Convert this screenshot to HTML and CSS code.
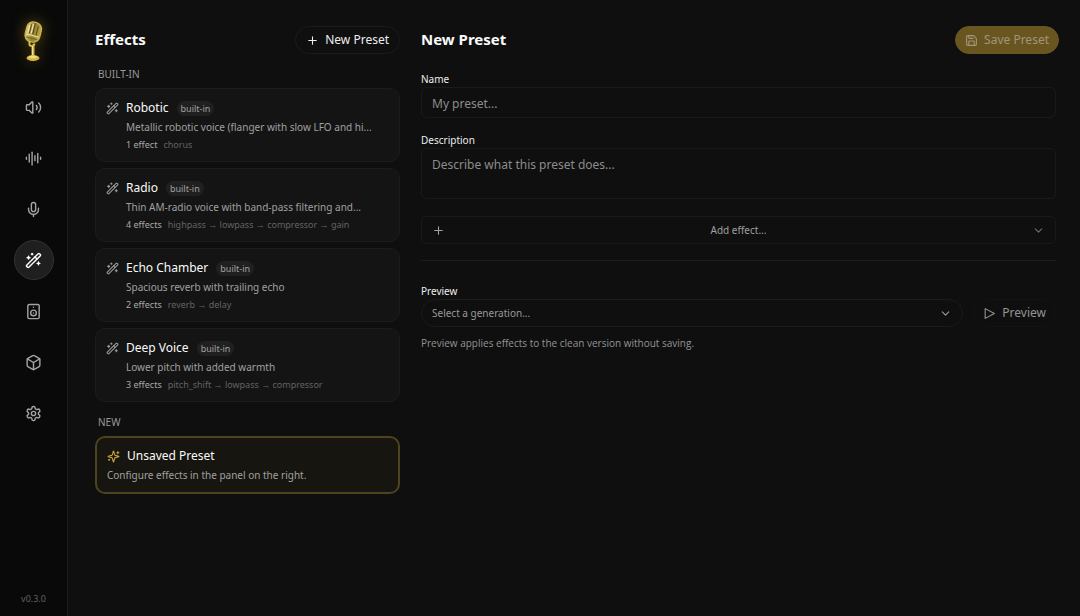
FILE: index.html
```
<!DOCTYPE html>
<html lang="en">
<head>
<meta charset="utf-8">
<meta name="viewport" content="width=device-width, initial-scale=1">
<title>Effects</title>
<link rel="stylesheet" href="styles.css">
</head>
<body>
<svg class="sprite" aria-hidden="true">
  <symbol id="wand" viewBox="0 0 24 24"><path d="m21.64 3.64-1.28-1.28a1.21 1.21 0 0 0-1.72 0L2.36 18.64a1.21 1.21 0 0 0 0 1.72l1.28 1.28a1.2 1.2 0 0 0 1.72 0L21.64 5.36a1.2 1.2 0 0 0 0-1.72"/><path d="m14 7 3 3"/><path d="M5 6v4"/><path d="M19 14v4"/><path d="M10 2v2"/><path d="M7 8H3"/><path d="M21 16h-4"/><path d="M11 3H9"/></symbol>
  <symbol id="plus" viewBox="0 0 24 24"><path d="M5 12h14"/><path d="M12 5v14"/></symbol>
  <symbol id="chevron" viewBox="0 0 24 24"><path d="m6 9 6 6 6-6"/></symbol>
</svg>
<div class="app">
  <nav class="sidebar" aria-label="Main">
    <svg class="logo" viewBox="0 0 36 52" role="img" aria-label="Microphone logo">
      <defs>
        <linearGradient id="gold" x1="0" y1="0" x2="1" y2="0"><stop offset="0" stop-color="#e0cc74"/><stop offset=".5" stop-color="#8f7d38"/><stop offset="1" stop-color="#c4a93e"/></linearGradient>
      </defs>
      <g transform="rotate(14 17 15)">
        <rect x="10" y="6" width="15" height="20" rx="6.500" fill="url(#gold)" stroke="#cdb558" stroke-width="1.200"/>
        <path d="M14 9v9M17.500 7v11M21 9v10" stroke="#574a1a" stroke-width="1"/>
        <path d="M12.500 10v8M15.800 8v10" stroke="#f3e7a8" stroke-width="1.200"/>
        <path d="M11 19.500h13" stroke="#e8d884" stroke-width="1.300"/>
        <path d="M12 22.500h11" stroke="#74642a" stroke-width="1"/>
      </g>
      <path d="M13.500 25v3.500c0 2 4.500 2 5-1" fill="none" stroke="#d9bf48" stroke-width="2"/>
      <path d="M17 29v11" stroke="#cfb54a" stroke-width="3"/>
      <path d="M16.500 30v9" stroke="#f3e390" stroke-width="1"/>
      <ellipse cx="17" cy="42" rx="6.500" ry="3" fill="#d4b840"/>
      <ellipse cx="17" cy="41" rx="4" ry="1.200" fill="#f0df80"/>
    </svg>
    <a class="nav-item" href="#generate" aria-label="Generate"><svg class="icon" viewBox="0 0 24 24"><path d="M11 4.702a.705.705 0 0 0-1.203-.498L6.413 7.587A1.400 1.400 0 0 1 5.416 8H3a1 1 0 0 0-1 1v6a1 1 0 0 0 1 1h2.416a1.400 1.400 0 0 1 .997.413l3.383 3.384A.705.705 0 0 0 11 19.298z"/><path d="M16 9a5 5 0 0 1 0 6"/><path d="M19.364 18.364a9 9 0 0 0 0-12.728"/></svg></a>
    <a class="nav-item" href="#stories" aria-label="Stories"><svg class="icon" viewBox="0 0 24 24"><path d="M2 10v3"/><path d="M6 6v11"/><path d="M10 3v18"/><path d="M14 8v7"/><path d="M18 5v13"/><path d="M22 10v3"/></svg></a>
    <a class="nav-item" href="#voices" aria-label="Voices"><svg class="icon" viewBox="0 0 24 24"><path d="M12 2a3 3 0 0 0-3 3v7a3 3 0 0 0 6 0V5a3 3 0 0 0-3-3Z"/><path d="M19 10v2a7 7 0 0 1-14 0v-2"/><path d="M12 19v3"/></svg></a>
    <a class="nav-item active" href="#effects" aria-label="Effects" aria-current="page"><svg class="icon"><use href="#wand"/></svg></a>
    <a class="nav-item" href="#audio" aria-label="Audio"><svg class="icon" viewBox="0 0 24 24"><rect width="16" height="20" x="4" y="2" rx="2"/><path d="M12 6h.01"/><circle cx="12" cy="14" r="4"/><path d="M12 14h.01"/></svg></a>
    <a class="nav-item" href="#models" aria-label="Models"><svg class="icon" viewBox="0 0 24 24"><path d="M21 8a2 2 0 0 0-1-1.730l-7-4a2 2 0 0 0-2 0l-7 4A2 2 0 0 0 3 8v8a2 2 0 0 0 1 1.730l7 4a2 2 0 0 0 2 0l7-4A2 2 0 0 0 21 16Z"/><path d="m3.300 7 8.700 5 8.700-5"/><path d="M12 22V12"/></svg></a>
    <a class="nav-item" href="#settings" aria-label="Settings"><svg class="icon" viewBox="0 0 24 24"><path d="M12.220 2h-.44a2 2 0 0 0-2 2v.18a2 2 0 0 1-1 1.730l-.43.25a2 2 0 0 1-2 0l-.15-.08a2 2 0 0 0-2.730.730l-.22.38a2 2 0 0 0 .730 2.730l.15.1a2 2 0 0 1 1 1.720v.51a2 2 0 0 1-1 1.740l-.15.09a2 2 0 0 0-.730 2.730l.22.38a2 2 0 0 0 2.730.730l.15-.08a2 2 0 0 1 2 0l.43.25a2 2 0 0 1 1 1.730V20a2 2 0 0 0 2 2h.44a2 2 0 0 0 2-2v-.18a2 2 0 0 1 1-1.730l.43-.25a2 2 0 0 1 2 0l.15.08a2 2 0 0 0 2.730-.730l.22-.39a2 2 0 0 0-.730-2.730l-.15-.08a2 2 0 0 1-1-1.740v-.5a2 2 0 0 1 1-1.740l.15-.09a2 2 0 0 0 .730-2.730l-.22-.38a2 2 0 0 0-2.730-.730l-.15.08a2 2 0 0 1-2 0l-.43-.25a2 2 0 0 1-1-1.730V4a2 2 0 0 0-2-2z"/><circle cx="12" cy="12" r="3"/></svg></a>
    <span class="version">v0.3.0</span>
  </nav>

  <main class="content">
    <section class="presets" aria-labelledby="effects-title">
      <header class="bar">
        <h1 class="title" id="effects-title">Effects</h1>
        <button class="pill new-button" type="button"><svg class="icon small"><use href="#plus"/></svg>New Preset</button>
      </header>
      <h2 class="group">BUILT-IN</h2>
      <ul class="cards">
        <li><button class="card" type="button">
          <svg class="icon card-icon"><use href="#wand"/></svg>
          <span class="name">Robotic <span class="badge">built-in</span></span>
          <span class="desc">Metallic robotic voice (flanger with slow LFO and hi...</span>
          <span class="meta"><span class="count">1 effect</span><span class="chain">chorus</span></span>
        </button></li>
        <li><button class="card" type="button">
          <svg class="icon card-icon"><use href="#wand"/></svg>
          <span class="name">Radio <span class="badge">built-in</span></span>
          <span class="desc">Thin AM-radio voice with band-pass filtering and...</span>
          <span class="meta"><span class="count">4 effects</span><span class="chain">highpass → lowpass → compressor → gain</span></span>
        </button></li>
        <li><button class="card" type="button">
          <svg class="icon card-icon"><use href="#wand"/></svg>
          <span class="name">Echo Chamber <span class="badge">built-in</span></span>
          <span class="desc">Spacious reverb with trailing echo</span>
          <span class="meta"><span class="count">2 effects</span><span class="chain">reverb → delay</span></span>
        </button></li>
        <li><button class="card" type="button">
          <svg class="icon card-icon"><use href="#wand"/></svg>
          <span class="name">Deep Voice <span class="badge">built-in</span></span>
          <span class="desc">Lower pitch with added warmth</span>
          <span class="meta"><span class="count">3 effects</span><span class="chain">pitch_shift → lowpass → compressor</span></span>
        </button></li>
      </ul>
      <h2 class="group">NEW</h2>
      <button class="card selected" type="button">
        <svg class="icon card-icon" viewBox="0 0 24 24"><path d="M9.937 15.500A2 2 0 0 0 8.500 14.063l-6.135-1.582a.5.5 0 0 1 0-.962L8.500 9.936A2 2 0 0 0 9.937 8.500l1.582-6.135a.5.5 0 0 1 .963 0L14.063 8.500A2 2 0 0 0 15.500 9.937l6.135 1.581a.5.5 0 0 1 0 .964L15.500 14.063a2 2 0 0 0-1.437 1.437l-1.582 6.135a.5.5 0 0 1-.963 0z"/><path d="M20 3v4"/><path d="M22 5h-4"/><path d="M4 17v2"/><path d="M5 18H3"/></svg>
        <span class="name">Unsaved Preset</span>
        <span class="desc">Configure effects in the panel on the right.</span>
      </button>
    </section>

    <section class="editor" aria-labelledby="editor-title">
      <header class="bar">
        <h2 class="title" id="editor-title">New Preset</h2>
        <button class="pill save-button" type="button" disabled><svg class="icon small" viewBox="0 0 24 24"><path d="M15.200 3a2 2 0 0 1 1.400.6l3.800 3.800a2 2 0 0 1 .6 1.400V19a2 2 0 0 1-2 2H5a2 2 0 0 1-2-2V5a2 2 0 0 1 2-2z"/><path d="M17 21v-7a1 1 0 0 0-1-1H8a1 1 0 0 0-1 1v7"/><path d="M7 3v4a1 1 0 0 0 1 1h7"/></svg>Save Preset</button>
      </header>
      <form class="form">
        <div class="field">
          <label class="label" for="name">Name</label>
          <input class="control" id="name" type="text" placeholder="My preset...">
        </div>
        <div class="field">
          <label class="label" for="description">Description</label>
          <textarea class="control area" id="description" placeholder="Describe what this preset does..."></textarea>
        </div>
        <button class="add-effect" type="button" aria-haspopup="listbox"><svg class="icon small"><use href="#plus"/></svg><span>Add effect...</span><svg class="icon small chevron"><use href="#chevron"/></svg></button>
        <div class="preview">
          <label class="label" for="generation">Preview</label>
          <div class="preview-row">
            <div class="select-wrap">
              <select class="select" id="generation"><option>Select a generation...</option></select>
              <svg class="icon small select-chevron"><use href="#chevron"/></svg>
            </div>
            <button class="pill preview-button" type="button" disabled><svg class="icon small" viewBox="0 0 24 24"><path d="M4 3l17 9-17 9z"/></svg>Preview</button>
          </div>
          <p class="hint">Preview applies effects to the clean version without saving.</p>
        </div>
      </form>
    </section>
  </main>
</div>
</body>
</html>
```

FILE: styles.css
```
* { box-sizing: border-box; }

body {
  margin: 0;
  background: #0f0f0f;
  color: #ededed;
  font-family: "Noto Sans", "Open Sans", sans-serif;
  font-size: 12px;
}

button, input, textarea, select { font: inherit; color: inherit; margin: 0; }
h1, h2, p, ul { margin: 0; padding: 0; }
ul { list-style: none; }

.sprite { display: none; }

.icon {
  width: 17px;
  height: 17px;
  flex: none;
  fill: none;
  stroke: currentColor;
  stroke-width: 2;
  stroke-linecap: round;
  stroke-linejoin: round;
}
.icon.small { width: 13px; height: 13px; }

.app { display: flex; min-height: 100vh; }

.sidebar {
  width: 68px;
  flex: none;
  display: flex;
  flex-direction: column;
  align-items: center;
  gap: 11px;
  padding: 16px 0 10px;
  background: #090909;
  border-right: 1px solid #1b1b1b;
}
.logo {
  width: 36px;
  height: 52px;
  margin-bottom: 8px;
  filter: drop-shadow(0 0 7px #9a7d1290);
}
.nav-item {
  width: 40px;
  height: 40px;
  display: grid;
  place-items: center;
  border: 1px solid transparent;
  border-radius: 50%;
  color: #a3a3a3;
}
.nav-item.active { color: #fff; background: #1f1f1f; border-color: #333; }
.version { margin-top: auto; font-size: 9px; line-height: 14px; color: #626262; }

.content {
  flex: 1;
  min-width: 0;
  display: flex;
  gap: 21px;
  padding: 26px 21px 20px 27px;
}
.presets { width: 305px; flex: none; }
.editor { flex: 1; min-width: 0; }

.bar { display: flex; align-items: center; justify-content: space-between; height: 28px; }
.title { padding-bottom: 2px; font-size: 15px; line-height: 20px; font-weight: 700; color: #fafafa; }

.pill {
  display: flex;
  align-items: center;
  justify-content: center;
  gap: 6px;
  height: 28px;
  padding: 0 9px;
  border: 1px solid #1b1b1b;
  border-radius: 14px;
  background: none;
  line-height: 16px;
  white-space: nowrap;
}
.new-button { padding: 0 10px; }
.save-button { border-color: #69551f; background: #69551f; color: #a1967a; }

.group {
  padding: 12px 3px 6px;
  font-size: 10px;
  line-height: 16px;
  font-weight: 400;
  color: #999;
}
.cards { display: grid; gap: 6px; }

.card {
  width: 100%;
  display: grid;
  grid-template-columns: 13px minmax(0, 1fr);
  column-gap: 7px;
  row-gap: 1px;
  padding: 9px 10px;
  text-align: left;
  background: #141414;
  border: 1px solid #1c1c1c;
  border-radius: 10px;
}
.card-icon { width: 13px; height: 13px; align-self: center; color: #999; }
.name { display: flex; align-items: center; gap: 8px; font-size: 12px; line-height: 20px; color: #fafafa; }
.badge { padding: 0 4px; border-radius: 8px; background: #202020; font-size: 9px; line-height: 15px; color: #a0a0a0; }
.desc { grid-column: 2; font-size: 10px; line-height: 17px; color: #a0a0a0; white-space: nowrap; }
.meta { grid-column: 2; display: flex; gap: 6px; font-size: 9px; line-height: 15px; white-space: nowrap; }
.count { color: #a8a8a8; }
.chain { color: #626262; }

.card.selected { background: #17150f; border: 2px solid #4e431f; padding: 8px 10px; }
.selected .card-icon { color: #c9a23b; }
.selected .desc { grid-column: 1 / -1; }

.form { padding: 17px 3px 0 0; }
.field { display: flex; flex-direction: column; margin-bottom: 14px; }
.label { display: block; font-size: 10px; line-height: 16px; color: #ededed; }
.control {
  width: 100%;
  height: 31px;
  padding: 2px 10px 0;
  background: transparent;
  border: 1px solid #1a1a1a;
  border-radius: 6px;
  font-size: 12px;
  outline: none;
}
.control::placeholder { color: #8c8c8c; opacity: 1; }
.control.area { height: 51px; padding: 8px 10px; line-height: 16px; resize: none; }

.add-effect {
  width: 100%;
  height: 28px;
  margin-top: 17px;
  display: flex;
  align-items: center;
  justify-content: space-between;
  padding: 0 10px;
  background: transparent;
  border: 1px solid #1a1a1a;
  border-radius: 6px;
  font-size: 10px;
  color: #a0a0a0;
}
.chevron { color: #707070; }

.preview { margin-top: 16px; padding-top: 22px; border-top: 1px solid #1b1b1b; }
.preview-row { display: flex; gap: 10px; }
.select-wrap { flex: 1; display: grid; align-items: center; }
.select {
  grid-area: 1 / 1;
  width: 100%;
  height: 28px;
  padding: 0 10px;
  appearance: none;
  background: transparent;
  border: 1px solid #1b1b1b;
  border-radius: 14px;
  font-size: 10px;
  color: #999;
}
.select-chevron { grid-area: 1 / 1; justify-self: end; margin-right: 11px; color: #999; pointer-events: none; }
.preview-button { border-color: #131313; color: #949494; }
.hint { padding-top: 9px; font-family: "Open Sans", "Noto Sans", sans-serif; font-size: 10px; line-height: 15px; color: #949494; }
```
